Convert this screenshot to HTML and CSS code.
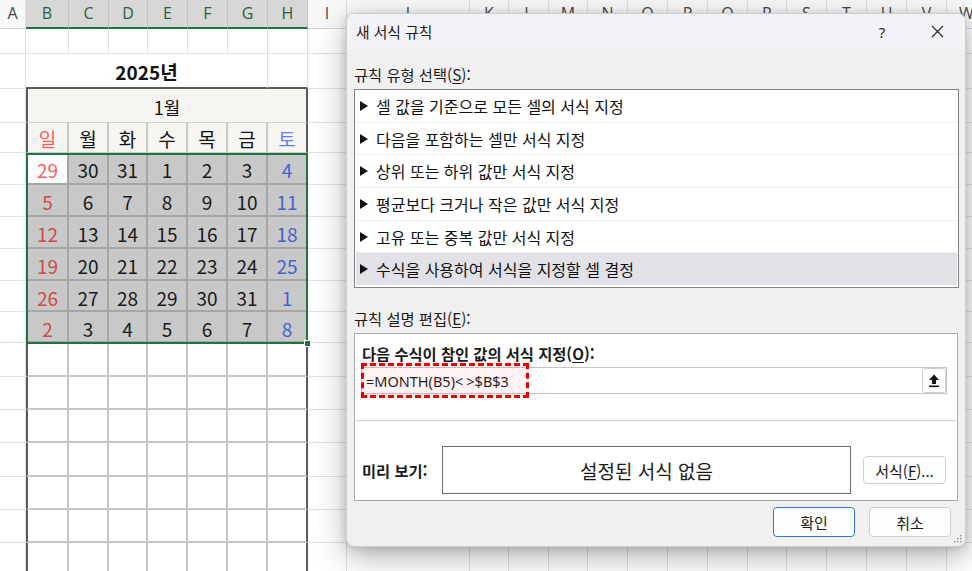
FILE: index.html
```html
<!DOCTYPE html>
<html lang="ko">
<head>
<meta charset="utf-8">
<title>새 서식 규칙</title>
<link rel="stylesheet" href="styles.css">
</head>
<body>
<div class="sheet">
  <div class="h">A</div><div class="h s">B</div><div class="h s">C</div><div class="h s">D</div><div class="h s">E</div><div class="h s">F</div><div class="h s">G</div><div class="h s">H</div><div class="h">I</div><div class="h">J</div><div class="h">K</div><div class="h">L</div><div class="h">M</div><div class="h">N</div><div class="h">O</div><div class="h">P</div><div class="h">Q</div><div class="h">R</div><div class="h">S</div><div class="h">T</div><div class="h">U</div><div class="h">V</div><div class="h">W</div>

  <div class="c"></div><div class="c"></div><div class="c"></div><div class="c"></div><div class="c"></div><div class="c"></div><div class="c"></div><div class="c"></div><div class="c"></div><div class="c"></div><div class="c"></div><div class="c"></div><div class="c"></div><div class="c"></div><div class="c"></div><div class="c"></div><div class="c"></div><div class="c"></div><div class="c"></div><div class="c"></div><div class="c"></div><div class="c"></div><div class="c"></div>

  <div class="c"></div><div class="yr">2025년</div><div class="c b2"></div><div class="c"></div><div class="c"></div><div class="c"></div><div class="c"></div><div class="c"></div><div class="c"></div><div class="c"></div><div class="c"></div><div class="c"></div><div class="c"></div><div class="c"></div><div class="c"></div><div class="c"></div><div class="c"></div><div class="c"></div>

  <div class="c"></div><div class="mo">1월</div><div class="c"></div><div class="c"></div><div class="c"></div><div class="c"></div><div class="c"></div><div class="c"></div><div class="c"></div><div class="c"></div><div class="c"></div><div class="c"></div><div class="c"></div><div class="c"></div><div class="c"></div><div class="c"></div><div class="c"></div>

  <div class="c"></div><div class="dn kl sunh">일</div><div class="dn">월</div><div class="dn">화</div><div class="dn">수</div><div class="dn">목</div><div class="dn">금</div><div class="dn kr sath">토</div><div class="c"></div><div class="c"></div><div class="c"></div><div class="c"></div><div class="c"></div><div class="c"></div><div class="c"></div><div class="c"></div><div class="c"></div><div class="c"></div><div class="c"></div><div class="c"></div><div class="c"></div><div class="c"></div><div class="c"></div>

  <div class="c"></div><div class="d kl w sunw">29</div><div class="d">30</div><div class="d">31</div><div class="d">1</div><div class="d">2</div><div class="d">3</div><div class="d kr sat">4</div><div class="c"></div><div class="c"></div><div class="c"></div><div class="c"></div><div class="c"></div><div class="c"></div><div class="c"></div><div class="c"></div><div class="c"></div><div class="c"></div><div class="c"></div><div class="c"></div><div class="c"></div><div class="c"></div><div class="c"></div>

  <div class="c"></div><div class="d kl sun">5</div><div class="d">6</div><div class="d">7</div><div class="d">8</div><div class="d">9</div><div class="d">10</div><div class="d kr sat">11</div><div class="c"></div><div class="c"></div><div class="c"></div><div class="c"></div><div class="c"></div><div class="c"></div><div class="c"></div><div class="c"></div><div class="c"></div><div class="c"></div><div class="c"></div><div class="c"></div><div class="c"></div><div class="c"></div><div class="c"></div>

  <div class="c"></div><div class="d kl sun">12</div><div class="d">13</div><div class="d">14</div><div class="d">15</div><div class="d">16</div><div class="d">17</div><div class="d kr sat">18</div><div class="c"></div><div class="c"></div><div class="c"></div><div class="c"></div><div class="c"></div><div class="c"></div><div class="c"></div><div class="c"></div><div class="c"></div><div class="c"></div><div class="c"></div><div class="c"></div><div class="c"></div><div class="c"></div><div class="c"></div>

  <div class="c"></div><div class="d kl sun">19</div><div class="d">20</div><div class="d">21</div><div class="d">22</div><div class="d">23</div><div class="d">24</div><div class="d kr sat">25</div><div class="c"></div><div class="c"></div><div class="c"></div><div class="c"></div><div class="c"></div><div class="c"></div><div class="c"></div><div class="c"></div><div class="c"></div><div class="c"></div><div class="c"></div><div class="c"></div><div class="c"></div><div class="c"></div><div class="c"></div>

  <div class="c"></div><div class="d kl sun">26</div><div class="d">27</div><div class="d">28</div><div class="d">29</div><div class="d">30</div><div class="d">31</div><div class="d kr sat">1</div><div class="c"></div><div class="c"></div><div class="c"></div><div class="c"></div><div class="c"></div><div class="c"></div><div class="c"></div><div class="c"></div><div class="c"></div><div class="c"></div><div class="c"></div><div class="c"></div><div class="c"></div><div class="c"></div><div class="c"></div>

  <div class="c"></div><div class="d kl sun">2</div><div class="d">3</div><div class="d">4</div><div class="d">5</div><div class="d">6</div><div class="d">7</div><div class="d kr sat">8</div><div class="c"></div><div class="c"></div><div class="c"></div><div class="c"></div><div class="c"></div><div class="c"></div><div class="c"></div><div class="c"></div><div class="c"></div><div class="c"></div><div class="c"></div><div class="c"></div><div class="c"></div><div class="c"></div><div class="c"></div>

  <div class="c"></div><div class="k kl"></div><div class="k"></div><div class="k"></div><div class="k"></div><div class="k"></div><div class="k"></div><div class="k kr"></div><div class="c"></div><div class="c"></div><div class="c"></div><div class="c"></div><div class="c"></div><div class="c"></div><div class="c"></div><div class="c"></div><div class="c"></div><div class="c"></div><div class="c"></div><div class="c"></div><div class="c"></div><div class="c"></div><div class="c"></div>

  <div class="c"></div><div class="k kl"></div><div class="k"></div><div class="k"></div><div class="k"></div><div class="k"></div><div class="k"></div><div class="k kr"></div><div class="c"></div><div class="c"></div><div class="c"></div><div class="c"></div><div class="c"></div><div class="c"></div><div class="c"></div><div class="c"></div><div class="c"></div><div class="c"></div><div class="c"></div><div class="c"></div><div class="c"></div><div class="c"></div><div class="c"></div>

  <div class="c"></div><div class="k kl"></div><div class="k"></div><div class="k"></div><div class="k"></div><div class="k"></div><div class="k"></div><div class="k kr"></div><div class="c"></div><div class="c"></div><div class="c"></div><div class="c"></div><div class="c"></div><div class="c"></div><div class="c"></div><div class="c"></div><div class="c"></div><div class="c"></div><div class="c"></div><div class="c"></div><div class="c"></div><div class="c"></div><div class="c"></div>

  <div class="c"></div><div class="k kl"></div><div class="k"></div><div class="k"></div><div class="k"></div><div class="k"></div><div class="k"></div><div class="k kr"></div><div class="c"></div><div class="c"></div><div class="c"></div><div class="c"></div><div class="c"></div><div class="c"></div><div class="c"></div><div class="c"></div><div class="c"></div><div class="c"></div><div class="c"></div><div class="c"></div><div class="c"></div><div class="c"></div><div class="c"></div>

  <div class="c"></div><div class="k kl"></div><div class="k"></div><div class="k"></div><div class="k"></div><div class="k"></div><div class="k"></div><div class="k kr"></div><div class="c"></div><div class="c"></div><div class="c"></div><div class="c"></div><div class="c"></div><div class="c"></div><div class="c"></div><div class="c"></div><div class="c"></div><div class="c"></div><div class="c"></div><div class="c"></div><div class="c"></div><div class="c"></div><div class="c"></div>

  <div class="c"></div><div class="k kl"></div><div class="k"></div><div class="k"></div><div class="k"></div><div class="k"></div><div class="k"></div><div class="k kr"></div><div class="c"></div><div class="c"></div><div class="c"></div><div class="c"></div><div class="c"></div><div class="c"></div><div class="c"></div><div class="c"></div><div class="c"></div><div class="c"></div><div class="c"></div><div class="c"></div><div class="c"></div><div class="c"></div><div class="c"></div>

  <div class="c"></div><div class="k kl"></div><div class="k"></div><div class="k"></div><div class="k"></div><div class="k"></div><div class="k"></div><div class="k kr"></div><div class="c"></div><div class="c"></div><div class="c"></div><div class="c"></div><div class="c"></div><div class="c"></div><div class="c"></div><div class="c"></div><div class="c"></div><div class="c"></div><div class="c"></div><div class="c"></div><div class="c"></div><div class="c"></div><div class="c"></div>

  <div class="selbox"><span class="handle"></span></div>
</div>

<div class="dlg">
  <div class="tbar">
    <span class="ttl">새 서식 규칙</span>
    <span class="tbtn qbtn">?</span>
    <span class="tbtn xbtn"><svg width="13" height="13" viewBox="0 0 13 13"><path d="M1 1L12 12M12 1L1 12" stroke="#2b2b2b" stroke-width="1.2" fill="none"/></svg></span>
  </div>
  <div class="dbody">
    <div class="lbl">규칙 유형 선택(<u>S</u>):</div>
    <ul class="list">
      <li><svg class="tri" width="8" height="10" viewBox="0 0 8 10"><path d="M0 0L8 5L0 10Z" fill="#111"/></svg>셀 값을 기준으로 모든 셀의 서식 지정</li>
      <li><svg class="tri" width="8" height="10" viewBox="0 0 8 10"><path d="M0 0L8 5L0 10Z" fill="#111"/></svg>다음을 포함하는 셀만 서식 지정</li>
      <li><svg class="tri" width="8" height="10" viewBox="0 0 8 10"><path d="M0 0L8 5L0 10Z" fill="#111"/></svg>상위 또는 하위 값만 서식 지정</li>
      <li><svg class="tri" width="8" height="10" viewBox="0 0 8 10"><path d="M0 0L8 5L0 10Z" fill="#111"/></svg>평균보다 크거나 작은 값만 서식 지정</li>
      <li><svg class="tri" width="8" height="10" viewBox="0 0 8 10"><path d="M0 0L8 5L0 10Z" fill="#111"/></svg>고유 또는 중복 값만 서식 지정</li>
      <li class="sel"><svg class="tri" width="8" height="10" viewBox="0 0 8 10"><path d="M0 0L8 5L0 10Z" fill="#111"/></svg>수식을 사용하여 서식을 지정할 셀 결정</li>
    </ul>
    <div class="lbl lbl2">규칙 설명 편집(<u>E</u>):</div>
    <div class="desc">
      <div class="dtop">
        <div class="blbl">다음 수식이 참인 값의 서식 지정(<u>O</u>):</div>
        <div class="inp">
          <span class="ftext">=MONTH(B5)&lt;<span class="gt">&gt;</span>$B$3</span>
          <span class="upbtn"><svg width="12" height="14" viewBox="0 0 12 14"><path d="M6 0.5L11 6H8V10H4V6H1Z" fill="#111"/><rect x="1" y="11.5" width="10" height="1.6" fill="#111"/></svg></span>
          <span class="mark"></span>
        </div>
      </div>
      <div class="dbot">
        <span class="plbl">미리 보기:</span>
        <div class="pbox">설정된 서식 없음</div>
        <span class="btn fbtn">서식(<u>F</u>)...</span>
      </div>
    </div>
    <div class="btns">
      <span class="btn bb ok">확인</span>
      <span class="btn bb">취소</span>
    </div>
  </div>
  <svg class="grip" width="9" height="9" viewBox="0 0 9 9"><g fill="#8a8a8a"><rect x="7" y="1" width="1.4" height="1.4"/><rect x="4" y="4" width="1.4" height="1.4"/><rect x="7" y="4" width="1.4" height="1.4"/><rect x="1" y="7" width="1.4" height="1.4"/><rect x="4" y="7" width="1.4" height="1.4"/><rect x="7" y="7" width="1.4" height="1.4"/></g></svg>
</div>
</body>
</html>
```

FILE: styles.css
```css
* { box-sizing: border-box; margin: 0; padding: 0; }
html, body { width: 972px; height: 571px; overflow: hidden; background: #ffffff; }
body { position: relative; font-family: "Noto Sans CJK KR", "Noto Sans", sans-serif; color: #1a1a1a; }

.sheet {
  position: relative;
  display: grid;
  grid-template-columns: 26px 43px 40px 39px 40px 40px 40px 40px 39px 123px 39px 40px 39px 40px 40px 40px 40px 39px 40px 40px 40px 40px 40px;
  grid-template-rows: 29px 25px 35px 34px 30px 32px 32px 32px 32px 31px 31px 34px 33px 33px 34px 33px 33px 33px;
  width: 972px;
  height: 571px;
  overflow: hidden;
  font-family: "Noto Sans CJK KR", "Noto Sans", sans-serif;
  color: #111;
}

.c { border-right: 1px solid #e1e1e1; border-bottom: 1px solid #e1e1e1; }

.h {
  display: flex; align-items: center; justify-content: center;
  background: #f8f8f8;
  border-right: 1px solid #e1e1e1;
  border-bottom: 1px solid #d4d4d4;
  font-family: "Open Sans", "Noto Sans", sans-serif;
  font-size: 16px; color: #474747;
  padding-bottom: 2px;
}
.h.s { background: #d7d7d7; color: #2c5e40; border-right-color: #c2c2c2; border-bottom: 2px solid #217346; }

.yr, .mo, .dn, .d { display: flex; align-items: center; justify-content: center; }

.yr {
  grid-column: span 6;
  border-right: 1px solid #e1e1e1;
  border-bottom: 2px solid #5a5a5a;
  font-weight: 700; font-size: 19px; color: #111;
  padding-top: 2px;
}
.b2 { border-bottom: 2px solid #5a5a5a; }

.mo {
  grid-column: span 7;
  background: #f7f5f2;
  border-left: 2px solid #5a5a5a;
  border-right: 2px solid #5a5a5a;
  border-bottom: 1px solid #d0d0d0;
  font-size: 18px; padding-top: 2px;
}

.dn {
  background: #f7f5f2;
  border-right: 2px solid #c8c8c8;
  border-bottom: 1px solid #c8c8c8;
  font-size: 19px; padding-top: 2px;
}

.d {
  background: #c8c8c8;
  border-right: 2px solid #a6a6a6;
  border-bottom: 2px solid #a6a6a6;
  font-size: 19px; color: #1a1a1a; padding-top: 3px;
}
.d.w { background: #ffffff; }

.k { border-right: 2px solid #c6c6c6; border-bottom: 2px solid #c6c6c6; }
.kl { border-left: 2px solid #5a5a5a; }
.kr { border-right: 2px solid #5a5a5a; }

.sunh { color: #ff5a5a; }
.sath { color: #6a7cf2; }
.sunw { color: #ff5c5c; }
.sun { color: #cf4a4a; }
.sat { color: #4461d4; }

.selbox {
  position: absolute;
  left: 26px; top: 153px;
  width: 282px; height: 191px;
  border: 2px solid #217346;
  pointer-events: none;
}
.handle {
  position: absolute;
  right: -5px; bottom: -5px;
  width: 7px; height: 7px;
  background: #217346;
  border: 1px solid #ffffff;
}

/* dialog */
.dlg {
  position: absolute;
  left: 346px; top: 13px;
  width: 620px; height: 534px;
  background: #f0f0f0;
  border: 1px solid #cdcdcd;
  border-radius: 8px;
  box-shadow: 0 10px 32px rgba(0,0,0,0.30), 0 2px 10px rgba(0,0,0,0.14);
  overflow: hidden;
  display: flex; flex-direction: column;
  color: #1a1a1a;
}
.tbar { height: 35px; flex: none; display: flex; align-items: center; padding-left: 9px; background: #f3f3f7; }
.ttl { flex: 1; font-size: 14.8px; padding-bottom: 1px; }
.tbtn { width: 46px; height: 35px; display: flex; align-items: center; justify-content: center; font-family: "Noto Sans", sans-serif; font-size: 15px; color: #2b2b2b; }
.qbtn { margin-right: 9px; }
.xbtn { margin-right: 5px; }

.dbody { flex: 1; display: flex; flex-direction: column; padding: 15px 6px 0 7px; }
.lbl { font-size: 15.3px; line-height: 20px; height: 20px; }
.lbl2 { margin-top: 20px; }
u { text-decoration: underline; text-underline-offset: 2px; }

.list {
  margin-top: 5px; height: 199px;
  border: 1px solid #828282; background: #ffffff;
  list-style: none;
  display: flex; flex-direction: column;
}
.list li {
  flex: 1;
  display: flex; align-items: center;
  padding-left: 5px;
  font-size: 16px; color: #111;
  border-top: 1px solid #eeeeee;
}
.list li:first-child { border-top: 0; }
.list li.sel { background: #e1e1e7; margin: 0 1px 2px 1px; padding-left: 4px; }
.tri { margin-right: 8px; flex: none; }

.desc {
  margin-top: 5px; margin-right: 1px; height: 168px;
  border: 1px solid #a9a9a9; background: #ffffff;
  display: flex; flex-direction: column;
}
.dtop { height: 86px; flex: none; padding: 9px 10px 0 6px; }
.blbl { font-size: 15.3px; font-weight: 700; line-height: 20px; height: 20px; padding-left: 1px; }
.inp {
  position: relative;
  margin-top: 4px; height: 27px;
  border: 1px solid #c4c4c4;
  display: flex; align-items: center;
  padding-left: 4px;
}
.ftext { flex: 1; font-family: "Noto Sans", sans-serif; font-size: 14.5px; color: #1a1a1a; }
.gt { margin-left: 3px; }
.upbtn {
  width: 24px; height: 25px;
  border: 1px solid #cfcfcf; border-radius: 3px;
  background: #ffffff;
  display: flex; align-items: center; justify-content: center;
}
.mark {
  position: absolute;
  left: -1px; top: -5px;
  width: 168px; height: 35px;
  border: 3px dashed #e80000;
  background: rgba(255, 90, 90, 0.07);
}

.dbot {
  flex: 1;
  border-top: 1px solid #d3d3d3;
  display: flex; align-items: center;
  padding: 25px 11px 6px 7px;
}
.plbl { width: 80px; flex: none; font-size: 15.3px; font-weight: 700; }
.pbox {
  width: 409px; height: 48px; flex: none;
  border: 1px solid #6c6c6c;
  display: flex; align-items: center; justify-content: center;
  font-size: 19px; color: #1a1a1a;
}
.btn {
  display: flex; align-items: center; justify-content: center;
  border: 1px solid #d0d0d0; border-radius: 4px;
  background: #fdfdfd;
  font-size: 15px; color: #1a1a1a;
}
.fbtn { margin-left: 12px; width: 83px; height: 28px; }
.btns { margin-top: 6px; display: flex; justify-content: flex-end; gap: 14px; padding-right: 8px; }
.bb { width: 82px; height: 30px; }
.ok { border: 1px solid #2d7ad2; }
.grip { position: absolute; right: 3px; bottom: 3px; }
```
